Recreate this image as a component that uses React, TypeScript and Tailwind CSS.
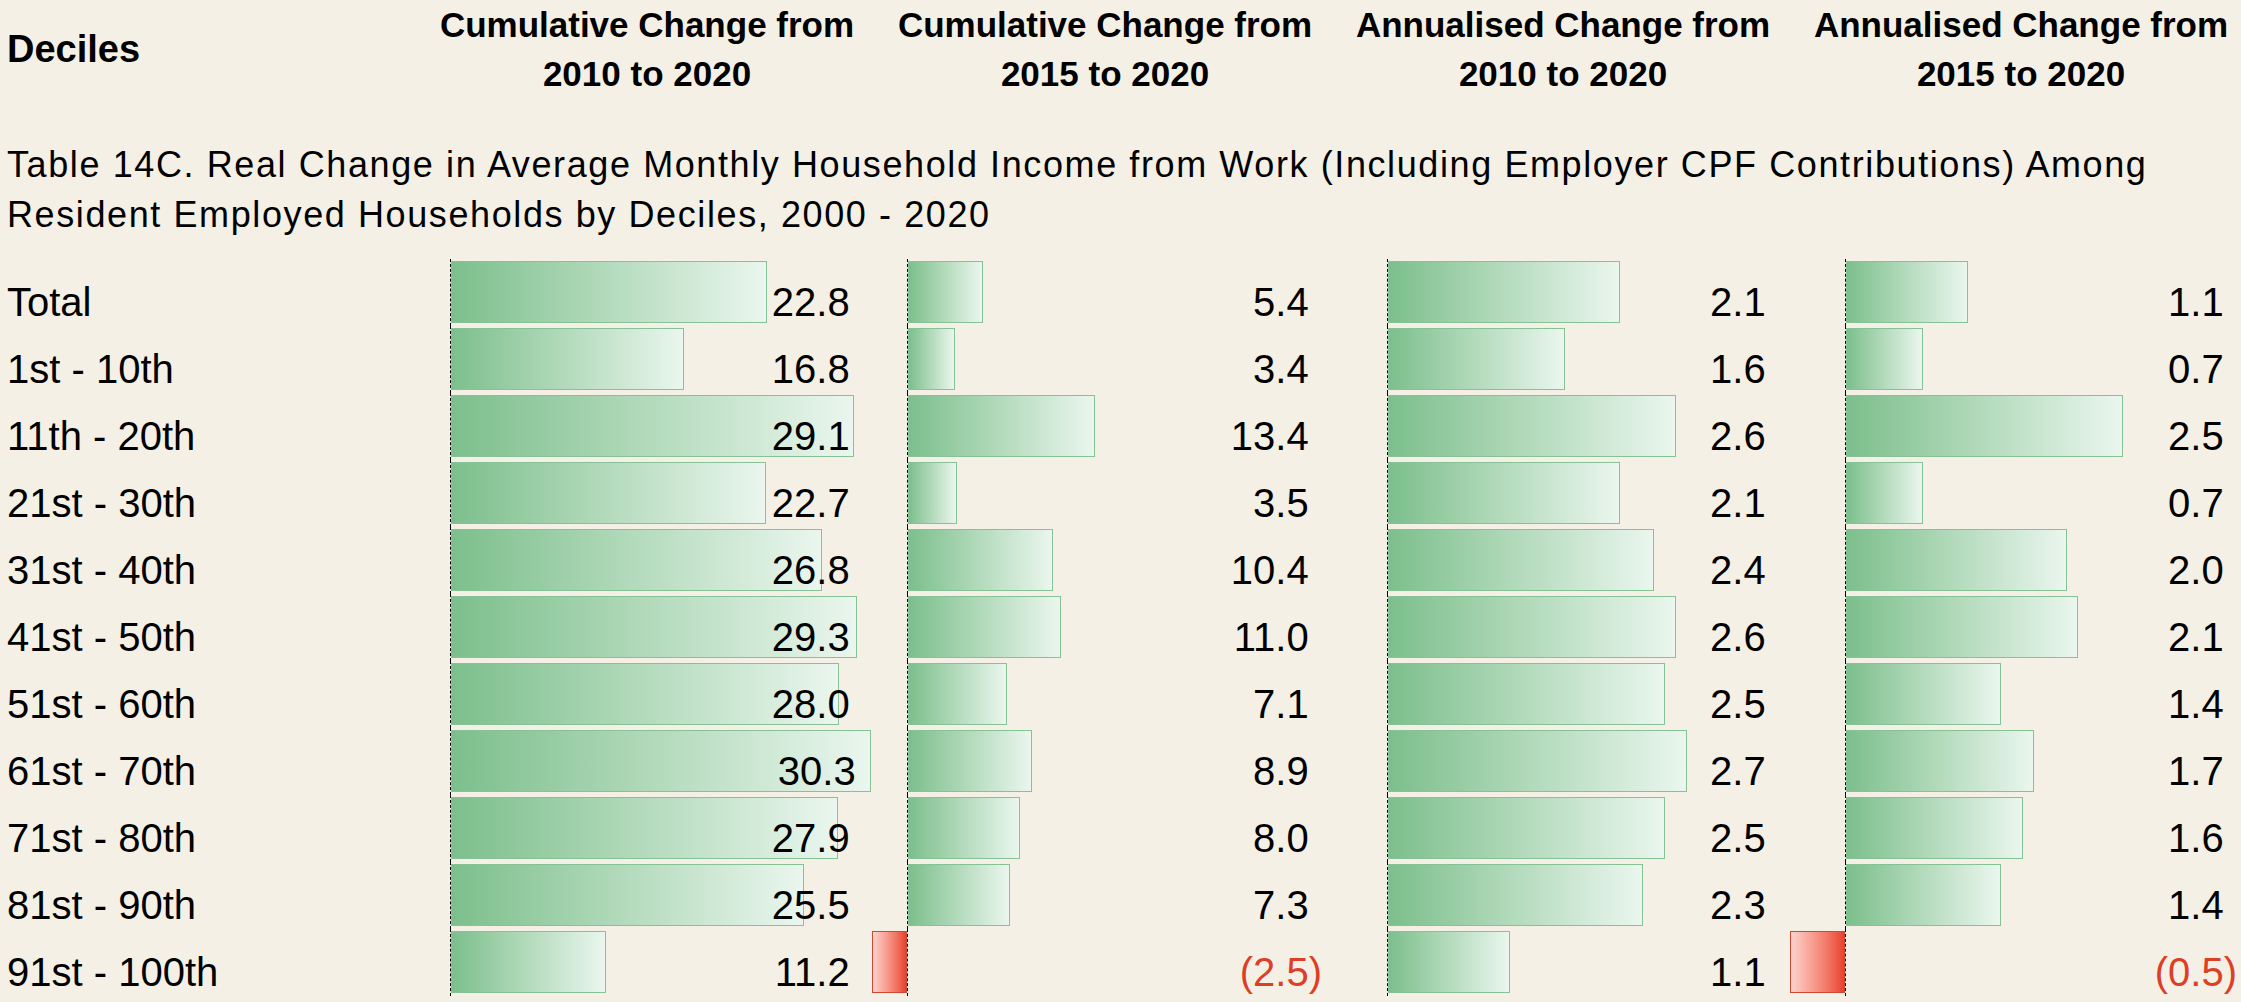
import React from "react";

type Col = { axisCls: string; scale: number };

// per-column axis offset and px-per-unit, read off the reference
const cols: Col[] = [
  { axisCls: "w-[10px]", scale: 13.86 },
  { axisCls: "w-[42px]", scale: 13.94 },
  { axisCls: "w-[63px]", scale: 110.7 },
  { axisCls: "w-[64px]", scale: 110.6 },
];

const headers = [
  ["Cumulative Change from", "2010 to 2020"],
  ["Cumulative Change from", "2015 to 2020"],
  ["Annualised Change from", "2010 to 2020"],
  ["Annualised Change from", "2015 to 2020"],
];

const rows: [string, number, number, number, number][] = [
  ["Total", 22.8, 5.4, 2.1, 1.1],
  ["1st - 10th", 16.8, 3.4, 1.6, 0.7],
  ["11th - 20th", 29.1, 13.4, 2.6, 2.5],
  ["21st - 30th", 22.7, 3.5, 2.1, 0.7],
  ["31st - 40th", 26.8, 10.4, 2.4, 2.0],
  ["41st - 50th", 29.3, 11.0, 2.6, 2.1],
  ["51st - 60th", 28.0, 7.1, 2.5, 1.4],
  ["61st - 70th", 30.3, 8.9, 2.7, 1.7],
  ["71st - 80th", 27.9, 8.0, 2.5, 1.6],
  ["81st - 90th", 25.5, 7.3, 2.3, 1.4],
  ["91st - 100th", 11.2, -2.5, 1.1, -0.5],
];

function BarCell({ value, col }: { value: number; col: Col }) {
  const w = Math.round(Math.abs(value) * col.scale);
  const neg = value < 0;
  return (
    <div className="grid h-[67px]">
      <div className="[grid-area:1/1] flex">
        <div className={`${col.axisCls} shrink-0 flex justify-end`}>
          {neg && (
            <div
              className="mt-[2px] h-[62px] border border-[#cf4632] bg-linear-to-r from-[#f9d3cf] to-[#e8402c]"
              style={{ width: w }}
            />
          )}
        </div>
        <div className="flex-1 border-l border-dashed border-black">
          {!neg && (
            <div
              className="mt-[2px] h-[62px] border border-[#85c295] bg-linear-to-r from-[#7cbf8c] to-[#eaf6ee]"
              style={{ width: w }}
            />
          )}
        </div>
      </div>
      <div className="[grid-area:1/1] flex items-end justify-end pr-[2px] pb-[4px] text-[40px] leading-[40px]">
        {neg ? (
          <span className="text-[#dc3f26]">({Math.abs(value).toFixed(1)})</span>
        ) : (
          <span>
            {value.toFixed(1)}
            <span className="invisible">)</span>
          </span>
        )}
      </div>
    </div>
  );
}

export default function App() {
  return (
    <div className="w-[2241px] h-[1002px] overflow-hidden bg-[#f4f0e6] text-black font-['Liberation_Sans',Arial,sans-serif]">
      <div className="grid grid-cols-[418px_458px_458px_458px_458px] h-[98px]">
        <div className="flex items-center pl-[7px] text-[38px] leading-[40px] font-bold">Deciles</div>
        {headers.map((h, i) => (
          <div key={i} className="flex flex-col items-center text-[35px] leading-[49px] font-bold whitespace-nowrap">
            <div>{h[0]}</div>
            <div>{h[1]}</div>
          </div>
        ))}
      </div>

      <div className="mt-[42px] pl-[7px] pr-[20px] text-[36px] leading-[50px] tracking-[1.6px]">
        Table 14C. Real Change in Average Monthly Household Income from Work (Including Employer CPF Contributions) Among
        Resident Employed Households by Deciles, 2000 - 2020
      </div>

      <div className="mt-[19px]">
        {rows.map((r) => (
          <div key={r[0]} className="grid grid-cols-[440px_425px_459px_457px_458px] h-[67px]">
            <div className="flex items-end pl-[7px] pb-[4px] text-[40px] leading-[40px]">{r[0]}</div>
            {cols.map((c, i) => (
              <BarCell key={i} value={r[i + 1] as number} col={c} />
            ))}
          </div>
        ))}
      </div>
    </div>
  );
}
